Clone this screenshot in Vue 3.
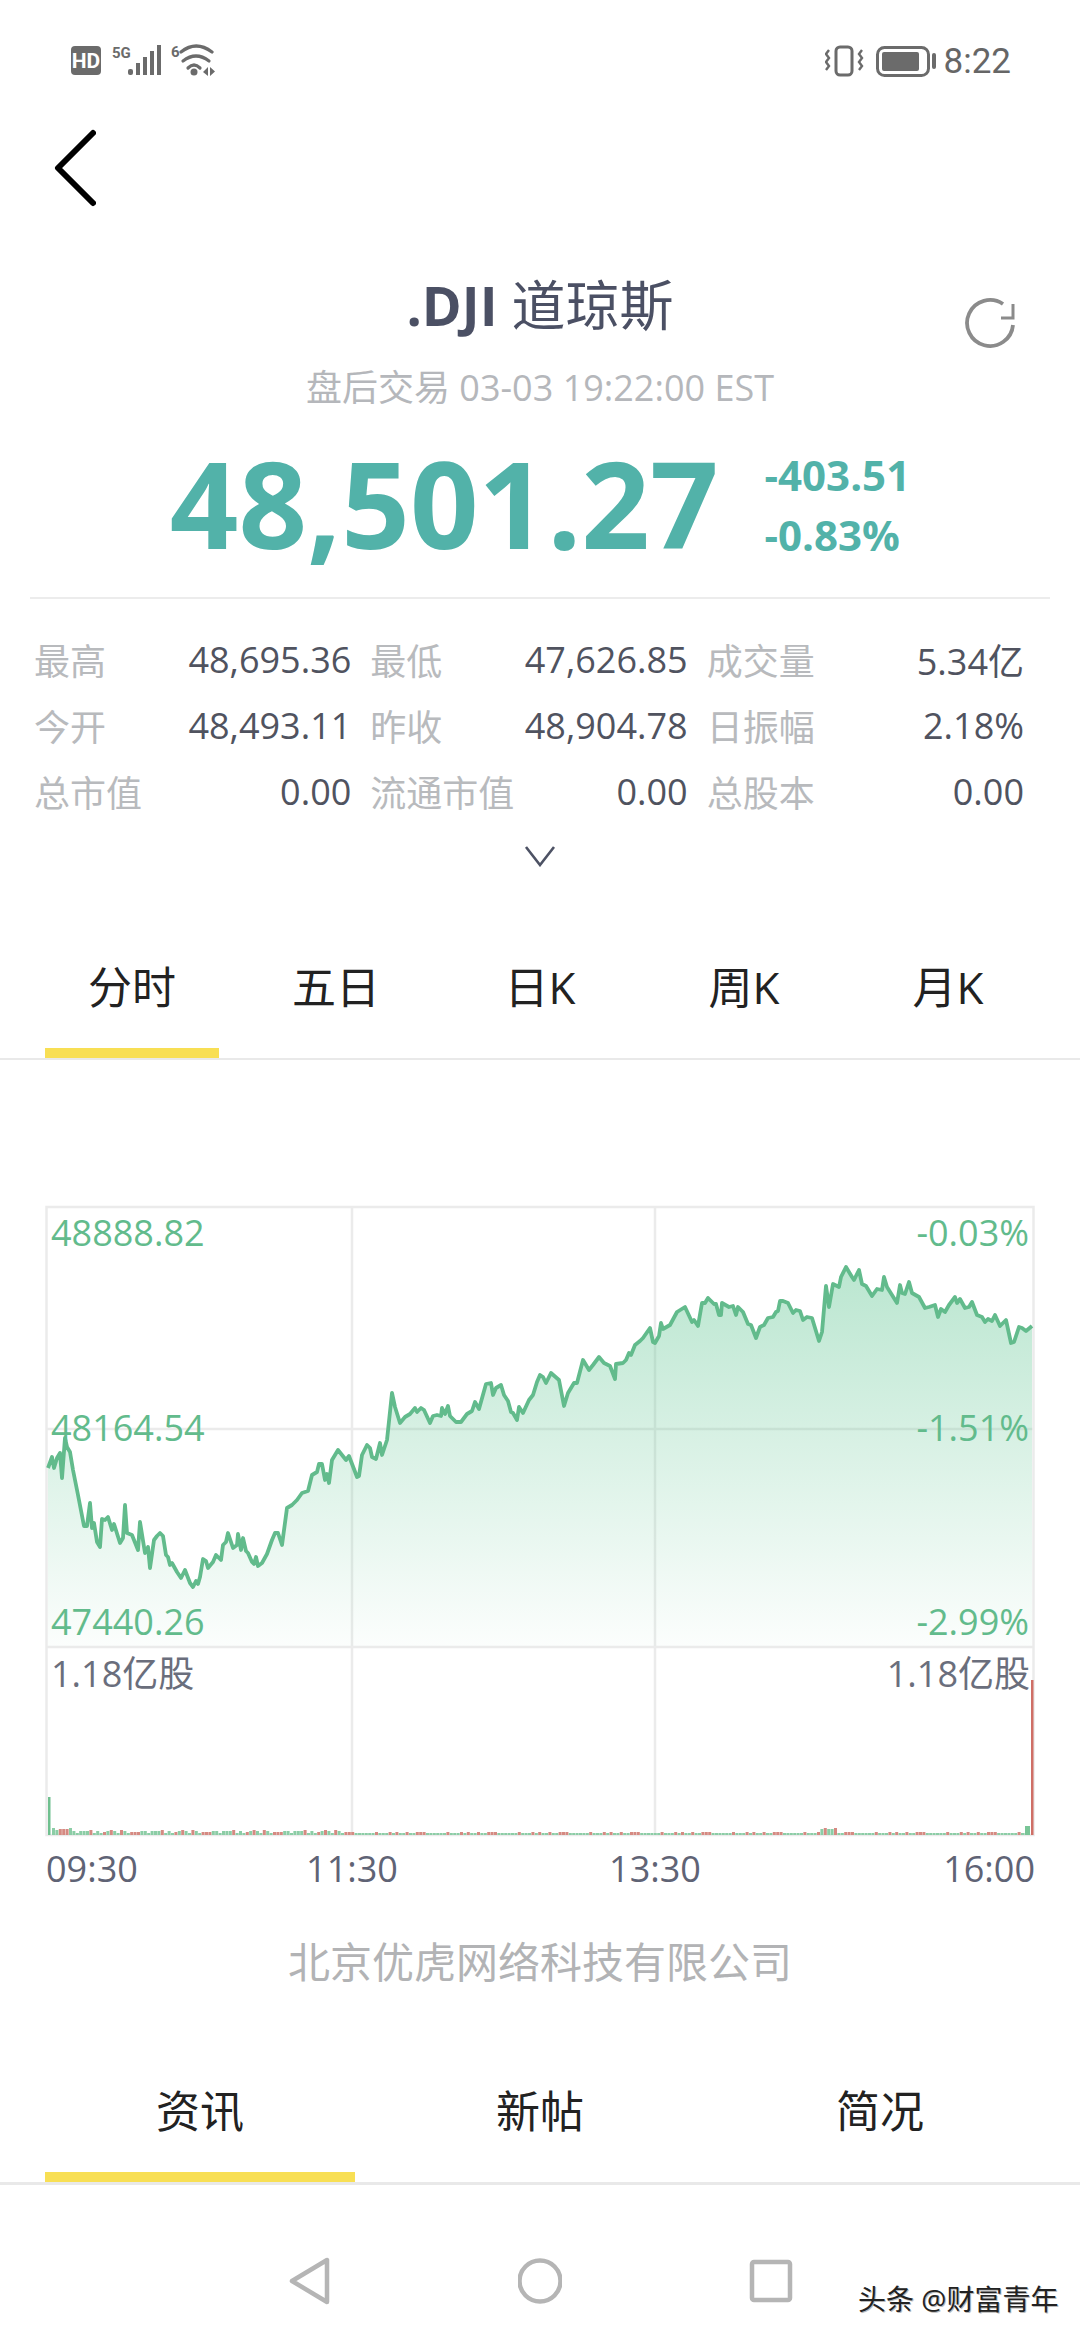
<script setup>
const priceLine =
  "48,1468 52,1457 54,1468 57,1458 60,1453 62,1478 65,1438 67,1447 70,1452 73,1470 78,1495 84,1526 87,1526 90,1503 92,1528 94,1523 97,1542 100,1547 102,1519 105,1520 108,1517 112,1530 114,1524 120,1543 123,1538 125,1505 127,1533 132,1535 138,1550 140,1522 145,1553 148,1547 150,1568 154,1540 157,1536 160,1533 163,1536 166,1555 168,1557 170,1565 172,1563 177,1572 181,1578 185,1570 190,1583 193,1587 196,1581 198,1584 200,1577 203,1559 206,1561 208,1568 213,1562 216,1555 221,1560 223,1545 226,1542 228,1533 233,1548 237,1545 238,1534 241,1550 243,1538 246,1551 248,1553 252,1562 254,1564 256,1557 258,1566 262,1563 267,1554 272,1540 275,1533 278,1533 282,1545 287,1508 292,1505 297,1500 302,1493 308,1491 312,1475 317,1472 319,1464 322,1464 325,1480 327,1474 329,1483 332,1460 338,1450 346,1460 349,1456 357,1477 359,1476 362,1455 367,1445 370,1448 372,1457 376,1459 380,1443 382,1455 387,1440 392,1393 395,1407 400,1423 405,1417 410,1414 415,1408 417,1412 421,1408 424,1410 430,1423 433,1416 437,1415 441,1416 442,1408 445,1414 448,1406 450,1416 456,1422 461,1422 467,1414 472,1411 475,1402 479,1409 486,1384 491,1383 493,1395 496,1388 501,1385 504,1395 508,1401 511,1412 513,1413 517,1420 519,1407 523,1413 529,1400 533,1395 537,1382 540,1375 543,1377 546,1383 551,1373 559,1380 564,1406 568,1393 571,1388 574,1383 577,1383 583,1360 589,1370 593,1365 599,1357 604,1363 610,1366 615,1379 616,1364 623,1363 626,1360 629,1353 631,1355 635,1345 640,1341 643,1338 650,1328 653,1342 655,1343 659,1336 661,1323 663,1329 670,1325 677,1312 685,1307 692,1322 694,1320 698,1326 702,1303 705,1303 708,1298 714,1304 716,1304 719,1315 721,1315 722,1303 729,1307 733,1306 736,1315 738,1307 743,1312 748,1324 751,1325 756,1338 760,1327 764,1325 768,1318 773,1317 776,1312 778,1311 780,1301 783,1301 788,1303 793,1313 796,1310 800,1311 803,1320 807,1317 812,1318 819,1341 822,1332 826,1286 829,1307 833,1284 839,1287 841,1277 846,1267 852,1277 854,1280 859,1270 862,1284 866,1286 872,1296 877,1289 882,1290 884,1277 887,1287 897,1303 900,1285 902,1293 905,1294 909,1282 912,1293 919,1297 925,1308 929,1307 935,1305 938,1317 941,1309 945,1312 949,1305 955,1297 957,1303 960,1299 965,1308 969,1307 972,1302 977,1315 982,1317 985,1322 988,1319 992,1321 995,1315 1000,1326 1006,1320 1011,1343 1014,1342 1019,1327 1022,1328 1026,1331 1032,1326";
const priceArea = `48,1646 ${priceLine} 1032,1646`;

// tiny volume bars along the bottom of the chart
const volumes = [];
let seed = 7;
for (let x = 52; x < 1025; x += 3.4) {
  seed = (seed * 73 + 41) % 211;
  const h = 2 + (seed % (x < 350 ? 4 : 2));
  const big = x < 72 ? 3 : x > 818 && x < 835 ? 4 : 0;
  volumes.push({ x, h: h + big, color: seed % 2 ? "#d58a82" : "#8ccda6" });
}

const stats = [
  ["最高", "48,695.36"], ["最低", "47,626.85"], ["成交量", "5.34亿"],
  ["今开", "48,493.11"], ["昨收", "48,904.78"], ["日振幅", "2.18%"],
  ["总市值", "0.00"], ["流通市值", "0.00"], ["总股本", "0.00"],
];
const chartTabs = ["分时", "五日", "日K", "周K", "月K"];
const newsTabs = ["资讯", "新帖", "简况"];
</script>

<template>
  <div class="page">
    <div class="status">
      <svg class="status-left" width="150" height="36" viewBox="70 44 150 36">
        <rect x="71" y="47" width="30" height="29" rx="4" fill="#6b6b6b" />
        <text x="86" y="69" class="hd">HD</text>
        <text x="112" y="59" class="tiny">5G</text>
        <g fill="#6b6b6b">
          <rect x="128" y="70" width="5" height="6" rx="2" />
          <rect x="136" y="64" width="4" height="12" />
          <rect x="143" y="58" width="4" height="18" />
          <rect x="150" y="52" width="4" height="24" />
          <rect x="157" y="46" width="4" height="30" />
          <circle cx="194" cy="73" r="3.5" />
          <path d="M203 73 l5 -5 v9 z M210 68 v9 l5 -4.5 z" />
        </g>
        <text x="171" y="58" class="tiny">6</text>
        <g fill="none" stroke="#6b6b6b" stroke-width="3.2" stroke-linecap="round">
          <path d="M181 53 Q196 41 212 53" />
          <path d="M183 62 Q196 52 209 62" />
          <path d="M188 69 Q194 63 200 69" />
        </g>
      </svg>
      <div class="status-right">
        <svg width="40" height="32" viewBox="823 45 40 32" fill="none" stroke="#6b6b6b">
          <rect x="834" y="47" width="16" height="28" rx="4" stroke-width="3" />
          <path d="M827 50 l-3 4 3 4 -3 4 3 4 -3 4" stroke-width="2.4" />
          <path d="M860 50 l-3 4 3 4 -3 4 3 4 -3 4" stroke-width="2.4" />
        </svg>
        <svg width="62" height="32" viewBox="873 45 62 32">
          <rect x="875.5" y="47.5" width="51" height="28" rx="7" fill="none" stroke="#6b6b6b" stroke-width="3" />
          <rect x="880" y="52" width="37" height="19" rx="2" fill="#6b6b6b" />
          <rect x="930" y="53" width="4" height="16" rx="2" fill="#6b6b6b" />
        </svg>
        <span class="clock">8:22</span>
      </div>
    </div>

    <div class="back-row">
      <svg width="44" height="80" viewBox="52 128 44 80" fill="none" stroke="#000" stroke-width="6" stroke-linecap="round" stroke-linejoin="round">
        <path d="M93 133 L58 168 L93 203" />
      </svg>
    </div>

    <div class="title-row">
      <div class="title"><b>.DJI</b> 道琼斯</div>
      <svg class="refresh" width="54" height="54" viewBox="963 297 54 54" fill="none" stroke="#8b8b8b" stroke-width="3.8">
        <path d="M1003 304 A23 23 0 1 0 1013 325" />
        <path d="M1013 304 V318 H1001" stroke-width="3" />
      </svg>
    </div>
    <div class="subtitle">盘后交易 03-03 19:22:00 EST</div>

    <div class="quote">
      <div class="price">48,501.27</div>
      <div class="change">
        <span>-403.51</span>
        <span>-0.83%</span>
      </div>
    </div>
    <div class="rule"></div>

    <div class="stats">
      <div v-for="s in stats" :key="s[0]" class="stat">
        <span class="stat-label">{{ s[0] }}</span>
        <span class="stat-value">{{ s[1] }}</span>
      </div>
    </div>
    <div class="expand">
      <svg width="32" height="22" viewBox="0 0 32 22" fill="none" stroke="#4d5264" stroke-width="2.6">
        <path d="M2 2 L16 20 L30 2" />
      </svg>
    </div>

    <div class="tabs chart-tabs">
      <div v-for="(t, i) in chartTabs" :key="t" class="tab">
        <span class="tab-label">{{ t }}</span>
        <span class="tab-bar" :class="{ on: i === 0 }"></span>
      </div>
    </div>

    <svg class="chart" width="1080" height="700" viewBox="0 1200 1080 700">
      <defs>
        <linearGradient id="area" gradientUnits="userSpaceOnUse" x1="0" y1="1270" x2="0" y2="1647">
          <stop offset="0" stop-color="#5dc490" stop-opacity="0.42" />
          <stop offset="1" stop-color="#5dc490" stop-opacity="0.02" />
        </linearGradient>
      </defs>
      <g fill="none" stroke="#ebebeb" stroke-width="2.5">
        <rect x="46.5" y="1207" width="987" height="628" />
        <path d="M46 1429 H1034 M46 1647 H1034 M352 1207 V1835 M655 1207 V1835" />
      </g>
      <polygon :points="priceArea" fill="url(#area)" />
      <polyline :points="priceLine" fill="none" stroke="#62bb8c" stroke-width="3.8" stroke-linejoin="round" />

      <text x="51" y="1246" class="axis up">48888.82</text>
      <text x="51" y="1441" class="axis up">48164.54</text>
      <text x="51" y="1635" class="axis up">47440.26</text>
      <text x="1029" y="1246" class="axis up end">-0.03%</text>
      <text x="1029" y="1441" class="axis up end">-1.51%</text>
      <text x="1029" y="1635" class="axis up end">-2.99%</text>
      <text x="51" y="1687" class="axis vol">1.18亿股</text>
      <text x="1030" y="1687" class="axis vol end">1.18亿股</text>

      <rect v-for="v in volumes" :key="v.x" :x="v.x" :y="1835 - v.h" width="3" :height="v.h" :fill="v.color" />
      <rect x="48" y="1797" width="2.5" height="38" fill="#6fc08f" />
      <rect x="1025" y="1826" width="5" height="9" fill="#79c597" />
      <rect x="1031" y="1680" width="2.5" height="155" fill="#cf6f66" />

      <text x="46" y="1882" class="axis time">09:30</text>
      <text x="352" y="1882" class="axis time mid">11:30</text>
      <text x="655" y="1882" class="axis time mid">13:30</text>
      <text x="1035" y="1882" class="axis time end">16:00</text>
    </svg>

    <div class="company">北京优虎网络科技有限公司</div>

    <div class="tabs news-tabs">
      <div v-for="(t, i) in newsTabs" :key="t" class="tab">
        <span class="tab-label">{{ t }}</span>
        <span class="tab-bar" :class="{ on: i === 0 }"></span>
      </div>
    </div>

    <div class="navbar">
      <svg width="44" height="48" viewBox="0 0 44 48" fill="none" stroke="#b5b5b5" stroke-width="4.5" stroke-linejoin="round">
        <path d="M40 3 V45 L5 24 Z" />
      </svg>
      <svg width="44" height="48" viewBox="0 0 44 48" fill="none" stroke="#b5b5b5" stroke-width="4.5">
        <circle cx="22" cy="24" r="20.5" />
      </svg>
      <svg width="44" height="48" viewBox="0 0 44 48" fill="none" stroke="#b5b5b5" stroke-width="4.5" stroke-linejoin="round">
        <rect x="3" y="5" width="38" height="38" rx="2" />
      </svg>
    </div>

    <div class="watermark">头条 @财富青年</div>
  </div>
</template>

<style scoped>
.page {
  position: relative;
  width: 1080px;
  height: 2340px;
  overflow: hidden;
  background: #fff;
  font-family: "Open Sans", "Noto Sans CJK SC", sans-serif;
}

.status {
  height: 120px;
  padding: 2px 69px 0 70px;
  box-sizing: border-box;
  display: flex;
  align-items: center;
  justify-content: space-between;
}
.status-left {
  display: block;
}
.status-right {
  display: flex;
  align-items: center;
  gap: 10px;
}
.hd {
  font: 700 21px "Roboto", sans-serif;
  fill: #fff;
  text-anchor: middle;
}
.tiny {
  font: 700 15px "Roboto", sans-serif;
  fill: #6b6b6b;
}
.clock {
  margin-left: -3px;
  font: 400 35px "Roboto", sans-serif;
  color: #666;
}

.back-row {
  height: 96px;
  padding-left: 52px;
  display: flex;
  align-items: center;
}

.title-row {
  position: relative;
  margin-top: 49px;
  height: 80px;
  text-align: center;
}
.title {
  font-size: 54px;
  line-height: 80px;
  color: #4b5064;
}
.refresh {
  position: absolute;
  right: 63px;
  top: 32px;
}
.subtitle {
  margin-top: 18px;
  height: 50px;
  font-size: 36px;
  line-height: 50px;
  text-align: center;
  color: #b5b7bb;
}

.quote {
  height: 184px;
  display: flex;
  align-items: center;
  justify-content: center;
  gap: 46px;
  color: #52b2a9;
}
.price {
  margin-top: -4px;
  font-size: 120px;
  font-weight: 700;
  line-height: 184px;
}
.change {
  display: flex;
  flex-direction: column;
  font-size: 42px;
  font-weight: 700;
  line-height: 60px;
}

.rule {
  height: 2px;
  margin: 0 30px;
  background: #ececec;
}

.stats {
  margin-top: 27px;
  padding: 0 56px 0 34px;
  display: grid;
  grid-template-columns: repeat(3, 1fr);
  column-gap: 19px;
}
.stat {
  height: 66px;
  display: flex;
  align-items: center;
  justify-content: space-between;
  font-size: 36px;
}
.stat-label {
  color: #b8babd;
}
.stat-value {
  color: #50535f;
}

.expand {
  height: 63px;
  display: flex;
  align-items: center;
  justify-content: center;
}

.tabs {
  display: flex;
  padding: 0 30px;
  border-bottom: 2px solid #e9e9e9;
  color: #222;
  font-size: 44px;
}
.chart-tabs {
  margin-top: 47px;
}
.news-tabs {
  margin-top: 66px;
  border-bottom-width: 3px;
}
.tab {
  flex: 1;
  height: 124px;
  display: flex;
  flex-direction: column;
  align-items: center;
}
.tab-label {
  height: 114px;
  line-height: 106px;
}
.tab-bar {
  width: 174px;
  height: 10px;
}
.news-tabs .tab-bar {
  width: 310px;
}
.tab-bar.on {
  background: #f8df54;
}

.chart {
  display: block;
  margin-top: 140px;
}
.axis {
  font-size: 36px;
  font-family: "Open Sans", "Noto Sans CJK SC", sans-serif;
}
.up {
  fill: #62bb8c;
}
.vol {
  fill: #6a6e7c;
}
.time {
  fill: #5f6375;
}
.end {
  text-anchor: end;
}
.mid {
  text-anchor: middle;
}

.company {
  margin-top: 32px;
  height: 60px;
  font-size: 42px;
  line-height: 60px;
  text-align: center;
  color: #b2b3b5;
}

.navbar {
  padding-top: 72px;
  display: flex;
  justify-content: center;
  gap: 187px;
}

.watermark {
  position: absolute;
  left: 858px;
  top: 2279px;
  font-size: 28px;
  line-height: 40px;
  color: #222;
  text-shadow: 1px 1px 0 #bbb;
  white-space: nowrap;
}
</style>
